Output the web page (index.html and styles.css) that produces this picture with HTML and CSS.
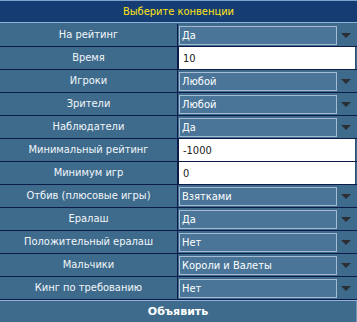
FILE: index.html
```html
<!DOCTYPE html>
<html lang="ru">
<head>
<meta charset="UTF-8" />
<meta name="viewport" content="width=device-width, initial-scale=1" />
<title>Выберите конвенции</title>
<link rel="stylesheet" href="styles.css">
</head>
<body>
  <form class="panel">
    <div class="head">Выберите конвенции</div>

    <div class="rows">
      <div class="row">
        <label class="label">На рейтинг</label>
        <div class="value"><select class="pick"><option>Да</option><option>Нет</option></select><span class="arrow"></span></div>
      </div>
      <div class="row">
        <label class="label">Время</label>
        <div class="value"><input class="field" type="text" value="10" /></div>
      </div>
      <div class="row">
        <label class="label">Игроки</label>
        <div class="value"><select class="pick"><option>Любой</option></select><span class="arrow"></span></div>
      </div>
      <div class="row">
        <label class="label">Зрители</label>
        <div class="value"><select class="pick"><option>Любой</option></select><span class="arrow"></span></div>
      </div>
      <div class="row">
        <label class="label">Наблюдатели</label>
        <div class="value"><select class="pick"><option>Да</option><option>Нет</option></select><span class="arrow"></span></div>
      </div>
      <div class="row">
        <label class="label">Минимальный рейтинг</label>
        <div class="value"><input class="field" type="text" value="-1000" /></div>
      </div>
      <div class="row">
        <label class="label">Минимум игр</label>
        <div class="value"><input class="field" type="text" value="0" /></div>
      </div>
      <div class="row">
        <label class="label">Отбив (плюсовые игры)</label>
        <div class="value"><select class="pick"><option>Взятками</option></select><span class="arrow"></span></div>
      </div>
      <div class="row">
        <label class="label">Ералаш</label>
        <div class="value"><select class="pick"><option>Да</option><option>Нет</option></select><span class="arrow"></span></div>
      </div>
      <div class="row">
        <label class="label">Положительный ералаш</label>
        <div class="value"><select class="pick"><option>Нет</option><option>Да</option></select><span class="arrow"></span></div>
      </div>
      <div class="row">
        <label class="label">Мальчики</label>
        <div class="value"><select class="pick"><option>Короли и Валеты</option></select><span class="arrow"></span></div>
      </div>
      <div class="row">
        <label class="label">Кинг по требованию</label>
        <div class="value"><select class="pick"><option>Нет</option><option>Да</option></select><span class="arrow"></span></div>
      </div>
    </div>

    <button class="submit" type="submit">Объявить</button>
  </form>
</body>
</html>
```

FILE: styles.css
```css
/* Базовые стили */
*,
*::before,
*::after {
  box-sizing: border-box;
}

body {
  margin: 0;
  font-family: 'DejaVu Sans', Verdana, sans-serif;
  font-stretch: condensed;
  font-size: 11px;
  background-color: #3e6b8c;
}

/* Панель */
.panel {
  width: 357px;
  margin: 0;
  background-color: #3e6b8c;
}

.head {
  height: 23px;
  line-height: 21px;
  text-align: center;
  color: #ffe414;
  background-color: #153d74;
  border-top: 1px solid #7ea2cb;
  border-bottom: 1px solid #8fb2d8;
}

.rows {
  padding-top: 1px;
}

/* Строки */
.row {
  display: grid;
  grid-template-columns: 178px 179px;
  height: 23px;
  border-bottom: 1px solid #0c1b4a;
}

.label {
  line-height: 22px;
  text-align: center;
  color: #f2f6fa;
  border-right: 1px solid #0c1b4a;
}

.value {
  display: flex;
  align-items: flex-start;
}

/* Списки */
.pick {
  appearance: none;
  -webkit-appearance: none;
  width: 158px;
  height: 19px;
  margin: 2px 0 0 1px;
  padding: 0 2px;
  font-family: inherit;
  font-stretch: inherit;
  font-size: 11px;
  line-height: 17px;
  color: #fff;
  background-color: #4a7598;
  border: 1px solid #a3bcd4;
  border-radius: 0;
}

.arrow {
  width: 0;
  height: 0;
  margin: 9px 0 0 4px;
  border-left: 5px solid transparent;
  border-right: 5px solid transparent;
  border-top: 5px solid #2b2f33;
}

/* Текстовые поля */
.field {
  width: 178px;
  height: 22px;
  margin: 0;
  padding: 0 4px;
  font-family: inherit;
  font-stretch: inherit;
  font-size: 11px;
  color: #222;
  background-color: #fff;
  border: none;
  border-left: 1px solid #0c1b4a;
  border-right: 1px solid #2c4f73;
  border-radius: 0;
}

/* Кнопка */
.submit {
  display: block;
  width: 357px;
  height: 22px;
  padding: 0;
  font-family: 'DejaVu Sans', Verdana, sans-serif;
  font-stretch: normal;
  font-size: 11px;
  font-weight: bold;
  color: #fff;
  background-color: #3e6b8c;
  border: none;
  border-top: 1px solid #8fb2d8;
  border-right: 1px solid #6f93b5;
  cursor: pointer;
}
```
